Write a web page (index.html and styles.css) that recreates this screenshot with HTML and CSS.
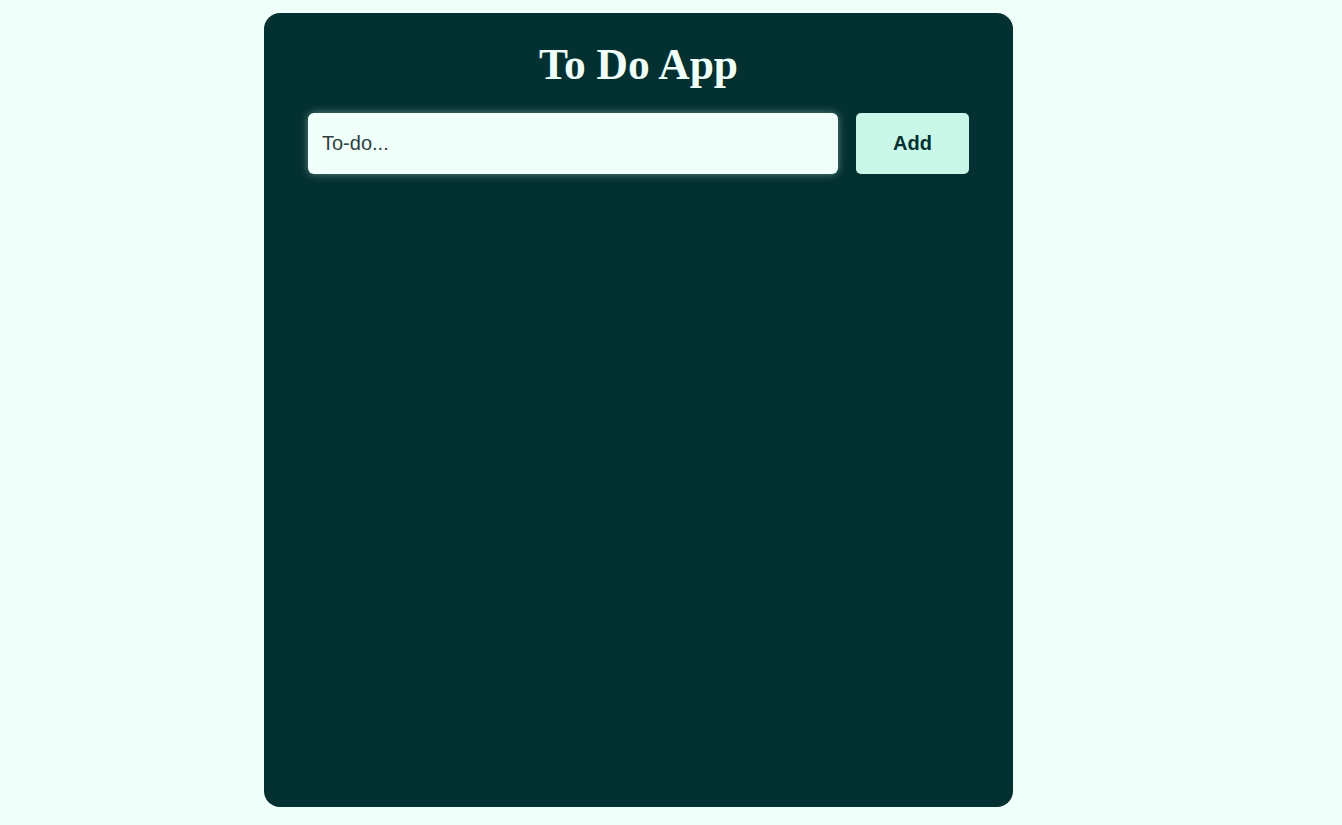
FILE: index.html
```html
<!DOCTYPE html>
<html>
<head>
<title>To Do App</title>
<meta charset="UTF-8">
<link rel="stylesheet" href="styles.css">
</head>
<body>
  <div class="app">
    <h1 class="title">To Do App</h1>
    <form class="entry" onsubmit="return false;">
      <input type="text" class="todo-input" placeholder="To-do...">
      <button type="submit" class="add-btn">Add</button>
    </form>
    <ul class="todo-list"></ul>
  </div>
</body>
</html>
```
FILE: styles.css
```css
html, body {
  margin: 0px;
  padding: 0px;
  background-color: #f0fffa;
  font-family: "Liberation Serif", serif;
}

body {
  display: flex;
  justify-content: center;
  padding-top: 13px;
  padding-right: 65px;
}

.app {
  width: 749px;
  height: 794px;
  box-sizing: border-box;
  background: #033030;
  border-radius: 16px;
  padding: 0 44px;
}

.title {
  color: #f0fffa;
  text-align: center;
  font-size: 43.5px;
  margin: 26px 0 24px 0;
}

.entry {
  display: flex;
  gap: 18px;
}

.todo-input {
  flex: 1;
  height: 61px;
  box-sizing: border-box;
  border: none;
  border-radius: 6px;
  background: #f0fffa;
  padding: 0 14px;
  font-family: "Liberation Sans", Arial, sans-serif;
  font-size: 20px;
  color: #033030;
  box-shadow: 0 0 8px rgba(200, 240, 225, 0.45);
  outline: none;
}

.todo-input::placeholder {
  color: #2f3f3d;
}

.add-btn {
  width: 113px;
  height: 61px;
  border: none;
  border-radius: 5px;
  background: #c9f7e8;
  color: #033030;
  font-family: "Liberation Sans", Arial, sans-serif;
  font-weight: bold;
  font-size: 20px;
  cursor: pointer;
}

.todo-list {
  list-style: none;
  margin: 0;
  padding: 0;
}
```
